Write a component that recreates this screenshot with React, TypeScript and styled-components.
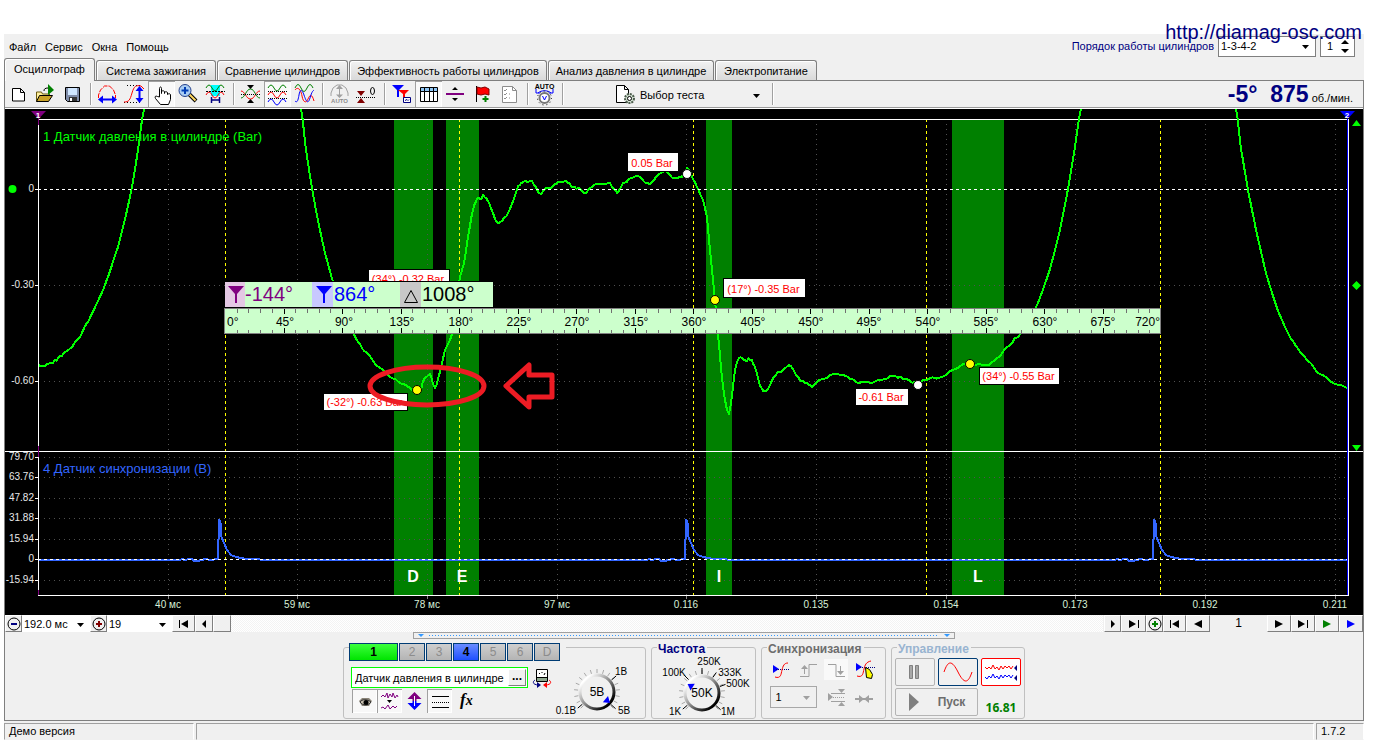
import React from "react";
import styled, { createGlobalStyle, css } from "styled-components";

const UI = `"Liberation Sans", Arial, sans-serif`;
const NUMERIC = `"Noto Sans", Verdana, sans-serif`;

const GlobalStyle = createGlobalStyle`
  *, *::before, *::after { box-sizing: border-box; }
  body { margin: 0; background: #fff; font-family: ${UI}; font-size: 11px; color: #000; }
  button, select, input { font: inherit; color: inherit; margin: 0; border-radius: 0; }
`;

/* ---------- window frame ---------- */

const Page = styled.div`
  position: relative;
  padding: 34px 12px 5px 4px;
`;

const SiteLink = styled.a`
  position: absolute;
  top: 20px;
  right: 14px;
  z-index: 2;
  font-size: 20px;
  line-height: 24px;
  color: #000080;
  text-decoration: none;
`;

const Window = styled.div`
  background: #f0f0f0;
`;

const MenuRow = styled.header`
  display: flex;
  align-items: center;
  justify-content: space-between;
  height: 24px;
  padding: 0 9px 0 1px;
`;

const Menu = styled.nav`
  display: flex;
  gap: 1px;
`;

const MenuItem = styled.button`
  border: 0;
  background: none;
  padding: 2px 4px 0;
  line-height: 16px;
`;

const OrderForm = styled.div`
  display: flex;
  align-items: center;
  gap: 4px;
`;

const OrderLabel = styled.label`
  color: #000080;
  line-height: 20px;
`;

const SelectBox = styled.span<{ $width: number; $height: number; $plain?: boolean; $arrow?: string }>`
  position: relative;
  display: inline-flex;
  flex: none;
  width: ${(p) => p.$width}px;
  height: ${(p) => p.$height}px;
  border: ${(p) => (p.$plain ? 0 : "1px solid #7f7f7f")};
  background: ${(p) => (p.$plain ? "transparent" : "#fff")};
  color: ${(p) => p.$arrow || "#000"};
  svg { position: absolute; right: 6px; top: 50%; margin-top: -1px; pointer-events: none; }
`;

const Select = styled.select`
  appearance: none;
  width: 100%;
  border: 0;
  padding: 0 2px;
  background: none;
  color: #000;
  outline: none;
`;

const NumberBox = styled.span`
  display: flex;
  align-items: center;
  width: 35px;
  height: 21px;
  border: 1px solid #7f7f7f;
  background: #fff;
  padding-right: 5px;
`;

const NumberInput = styled.input`
  appearance: textfield;
  width: 20px;
  flex: 1;
  min-width: 0;
  border: 0;
  background: none;
  padding: 0 0 0 6px;
  outline: none;
  &::-webkit-inner-spin-button { appearance: none; }
`;

const Tabs = styled.div`
  display: flex;
  align-items: flex-end;
  gap: 1px;
  height: 22px;
`;

const Tab = styled.button<{ $active?: boolean; $width: number }>`
  width: ${(p) => p.$width}px;
  height: 20px;
  padding: 0;
  border: 1px solid #7f7f7f;
  border-bottom: 0;
  border-radius: 3px 3px 0 0;
  background: linear-gradient(#f2f2f2, #d9d9d9);
  box-shadow: inset 1px 1px 0 #fff;
  white-space: nowrap;
  line-height: 18px;
  ${(p) =>
    p.$active &&
    css`
      height: 23px;
      margin: 0 0 -1px;
      padding-bottom: 3px;
      background: #f0f0f0;
      position: relative;
    `}
`;

const Body = styled.main`
  border: 1px solid #7f7f7f;
`;

/* ---------- toolbar ---------- */

const Toolbar = styled.div`
  display: flex;
  align-items: stretch;
  height: 28px;
  border-bottom: 1px solid #fff;
  box-shadow: inset 0 -1px 0 #9a9a9a;
`;

const ToolButton = styled.button<{ $pressed?: boolean }>`
  flex: none;
  width: 27px;
  height: 26px;
  padding: 0;
  border: 0;
  background: ${(p) => (p.$pressed ? "#f9f9f9" : "none")};
  box-shadow: ${(p) => (p.$pressed ? "inset 1px 1px 0 #a0a0a0, inset -1px 0 0 #fff" : "none")};
  svg { display: block; }
`;

const Separator = styled.span`
  flex: none;
  width: 8px;
  height: 22px;
  margin-top: 2px;
  border-left: 4px solid transparent;
  background: linear-gradient(90deg, #a0a0a0 1px, #fff 1px, #fff 2px, transparent 2px) no-repeat;
`;

const TestPicker = styled.label`
  display: flex;
  align-items: center;
  width: 202px;
  padding-left: 48px;
  gap: 2px;
  svg { flex: none; }
`;

const Rpm = styled.div`
  display: flex;
  align-items: baseline;
  margin-left: auto;
  padding-right: 10px;
  gap: 3px;
  line-height: 26px;
  color: #000;
`;

const RpmValue = styled.strong`
  font-size: 23px;
  color: #000080;
  white-space: pre;
`;

/* ---------- oscillogram ---------- */

const ScopeSvg = styled.svg`
  display: block;
  width: 100%;
  height: auto;
  background: #000;
`;

const SvgText = styled.text<{ $size: number; $fill: string; $anchor?: string; $bold?: boolean }>`
  font-family: ${UI};
  font-size: ${(p) => p.$size}px;
  font-weight: ${(p) => (p.$bold ? 700 : 400)};
  fill: ${(p) => p.$fill};
  text-anchor: ${(p) => p.$anchor || "start"};
`;

const FormulaText = styled.text`
  font: italic 700 17px "Liberation Serif", "Times New Roman", serif;
  fill: #000;
`;

/* ---------- navigation strip ---------- */

const NavStrip = styled.div`
  display: flex;
  height: 17px;
`;

const NavButton = styled.button<{ $width: number }>`
  display: flex;
  align-items: center;
  justify-content: center;
  flex: none;
  width: ${(p) => p.$width}px;
  height: 17px;
  padding: 0;
  border: 1px solid;
  border-color: #fff #7f7f7f #7f7f7f #fff;
  background: #f0f0f0;
  svg { flex: none; }
`;

const NavSelect = styled(SelectBox)`
  border: 0;
`;

const Track = styled.div`
  flex: 1;
  margin-right: 1px;
  background: repeating-conic-gradient(#fff 0 25%, #f3f3f3 0 50%) 0 0 / 2px 2px;
`;

const PageNumber = styled.output`
  width: 57px;
  text-align: center;
  font-size: 12px;
  line-height: 17px;
`;

const Splitter = styled.div`
  display: flex;
  align-items: center;
  width: 542px;
  max-width: 100%;
  height: 7px;
  margin: 0 auto;
  padding: 0 4px;
  gap: 5px;
  border: 1px solid #a0a0a0;
`;

const Dots = styled.span`
  flex: 1;
  height: 1px;
  background: repeating-linear-gradient(90deg, #3399ff 0 1px, transparent 1px 3px);
`;

/* ---------- control panel ---------- */

const Controls = styled.section`
  display: flex;
  justify-content: center;
  gap: 5px;
  padding: 8px 0 1px;
`;

const Group = styled.section<{ $width: number }>`
  width: ${(p) => p.$width}px;
  height: 72px;
  border: 1px solid #c0c0c0;
  border-radius: 3px;
`;

const GroupTitle = styled.h2<{ $color: string }>`
  width: fit-content;
  margin: -7px 0 0 5px;
  padding: 0 2px 0 1px;
  background: #f0f0f0;
  font-size: 12px;
  line-height: 16px;
  color: ${(p) => p.$color};
`;

const ChannelGroup = styled(Group)`
  display: flex;
  justify-content: space-between;
`;

const ChannelSide = styled.div`
  padding-left: 5px;
`;

const Channels = styled.div`
  display: flex;
  gap: 1px;
  width: fit-content;
  margin-top: -5px;
  background: #f0f0f0;
  box-shadow: 6px 0 0 #f0f0f0;
`;

const Channel = styled.button<{ $tone?: "green" | "blue" }>`
  width: ${(p) => (p.$tone === "green" ? 49 : 26)}px;
  height: 18px;
  padding: 0;
  font-size: 12px;
  line-height: 16px;
  border: 1px solid #003c74;
  ${(p) =>
    p.$tone
      ? css`
          font-weight: 700;
          color: #000;
          background: ${p.$tone === "green" ? "linear-gradient(#3cff3c, #00e400)" : "linear-gradient(#6a8cff, #1f50ff)"};
        `
      : css`
          color: #8c8c8c;
          background: linear-gradient(#cfcfcf, #b4b4b4);
        `}
`;

const SensorRow = styled.div`
  display: flex;
  align-items: center;
  gap: 4px;
  margin: 6px 0 0 2px;
`;

const SensorBox = styled.span`
  display: flex;
  width: 177px;
  height: 21px;
  padding: 1px;
  border: 1px solid #00ff00;
  background: #fff;
`;

const SensorInput = styled.input`
  flex: 1;
  min-width: 0;
  border: 0;
  padding: 0 0 0 2px;
  background: none;
  outline: none;
`;

const MoreButton = styled.button`
  width: 18px;
  padding: 0 0 4px;
  border: 1px solid;
  border-color: #fff #7f7f7f #7f7f7f #fff;
  background: #f0f0f0;
  font-size: 12px;
  font-weight: 700;
  line-height: 10px;
`;

const SmallButton = styled.button<{ $pressed?: boolean }>`
  width: 25px;
  height: 24px;
  padding: 0;
  border: 0;
  background: ${(p) => (p.$pressed ? "#f8f8f8" : "none")};
  box-shadow: ${(p) => (p.$pressed ? "inset 1px 1px 0 #a0a0a0, inset -1px -1px 0 #fff" : "none")};
  svg { display: block; }
`;

const ViewRow = styled.div`
  display: flex;
  margin: 1px 0 0 3px;
`;

const KnobSvg = styled.svg`
  flex: none;
  overflow: visible;
`;

const SyncGrid = styled.div`
  display: grid;
  grid-template-columns: repeat(4, 28px);
  grid-auto-rows: 24px;
  gap: 4px 0;
  justify-content: center;
  align-items: center;
`;

const SyncSelect = styled(SelectBox)`
  grid-column: span 2;
  margin-left: 2px;
  border-color: #a8a8a8;
  background: #f0f0f0;
`;

const RunGrid = styled.div`
  display: grid;
  grid-template-columns: repeat(3, 40px);
  gap: 2px 3px;
  padding: 1px 3px 0;
`;

const RunButton = styled.button<{ $edge: string; $wide?: boolean; $white?: boolean }>`
  display: flex;
  align-items: center;
  justify-content: center;
  height: 28px;
  padding: 0;
  gap: 18px;
  grid-column: span ${(p) => (p.$wide ? 2 : 1)};
  border: 1px solid ${(p) => p.$edge};
  border-radius: 2px;
  background: ${(p) => (p.$white ? "#fff" : "#f0f0f0")};
  color: #6d6d6d;
  font-size: 12px;
  font-weight: 700;
`;

const Reading = styled.output`
  align-self: end;
  text-align: center;
  font-family: ${NUMERIC};
  font-size: 12px;
  font-weight: 700;
  line-height: 16px;
  color: #008000;
`;

/* ---------- status bar ---------- */

const StatusBar = styled.footer`
  display: flex;
  gap: 2px;
  padding-top: 2px;
`;

const StatusCell = styled.div<{ $width?: number }>`
  flex: ${(p) => (p.$width ? "none" : 1)};
  width: ${(p) => (p.$width ? `${p.$width}px` : "auto")};
  height: 17px;
  padding-left: 4px;
  border: 1px solid;
  border-color: #a0a0a0 #fff #f0f0f0 #a0a0a0;
  line-height: 15px;
`;

/* ---------- icons ---------- */

type IconProps = { children: React.ReactNode; w?: number; h?: number };
const Icon = ({ children, w = 27, h = 26 }: IconProps) => (
  <svg width={w} height={h} viewBox={`0 0 ${w} ${h}`} fill="none" aria-hidden="true">
    {children}
  </svg>
);

const Caret = () => (
  <svg width="7" height="4" viewBox="0 0 7 4" aria-hidden="true">
    <path d="M0 0h7L3.5 4z" fill="currentColor" />
  </svg>
);

const wave = (x: number, y: number, step: number, amp: number, n: number) => {
  let d = `M${x} ${y}`;
  for (let i = 0; i < n; i++) d += `q${step / 2} ${i % 2 ? amp : -amp} ${step} 0`;
  return d;
};

const toolIcons: Record<string, React.ReactNode> = {
  new: <path d="M7.5 7.5h8l4 4v8.5h-12z M15.5 7.5v4h4" fill="#fff" stroke="#000" />,
  open: (
    <>
      <path d="M4.5 20.5v-9.5h5l1 2h7v3" fill="#ffef9c" stroke="#6b5a10" />
      <path d="M4.500 20.500l3-6h13l-4 6z" fill="#c9a227" stroke="#000" />
      <path d="M12 10c0-2 1-3 4-3" stroke="#000" />
      <path d="M16 3l6 6-6 5z" fill="#008000" />
    </>
  ),
  save: (
    <>
      <path d="M6.5 6.5h14v14h-12l-2-2z" fill="#7f8ca8" stroke="#000" />
      <path d="M9 7h9v7H9z" fill="#cfe6ff" />
      <path d="M10 16h8v4h-8z" fill="#333" />
      <path d="M11 17h2v3h-2z" fill="#fff" />
    </>
  ),
  cycle: (
    <>
      <path d="M4.500 17v-3l2-5 4-4h5l4 4 2 5v3" stroke="#f00" strokeDasharray="5 1" />
      <path d="M7 18.5h13" stroke="#00f" strokeWidth="2" />
      <path d="M4 18.5l5-4v8zM23 18.5l-5-4v8z" fill="#00f" />
    </>
  ),
  level: (
    <>
      <path d="M6 4.5h14M3 21.5h16" stroke="#000" strokeDasharray="1 2" />
      <path d="M3 21c5 0 6-2 8-9s4-8 9-7l3 3" stroke="#f00" />
      <path d="M18.5 9v9" stroke="#00f" strokeWidth="2" />
      <path d="M18.5 5l4 5h-8zM18.5 22l4-5h-8z" fill="#00f" />
    </>
  ),
  hand: (
    <path
      d="M11.5 16V7.5c0-2 2-2 2 0v5-2c1-1 2-1 3 0v2-1c1-1 2-1 3 0v2c1-1 2.5-1 3 0v5l-2 5h-8l-5-6c-1-2 0-3 2-2z"
      fill="#fff"
      stroke="#000"
    />
  ),
  zoom: (
    <>
      <path d="M14 13l7 7" stroke="#000" strokeWidth="4" />
      <path d="M14.5 13.5l6 6" stroke="#ffd75e" strokeWidth="2" />
      <circle cx="10" cy="9.5" r="6" fill="#a9cdf3" stroke="#24408a" />
      <path d="M6.5 9.5h7M10 6v7" stroke="#003cb4" strokeWidth="2" />
    </>
  ),
  range: (
    <>
      <path d="M9 4h9v11H9z" fill="#00ffff" />
      <path d={wave(4, 7, 6, 6, 3)} stroke="#008000" />
      <path d={wave(4, 14, 6, 6, 3)} stroke="#f00" />
      <path d="M4 10.5h19" stroke="#000" strokeDasharray="2 1" />
      <path d="M9.5 16v6M17.5 16v6M10 19h8" stroke="#000080" strokeWidth="1.5" />
    </>
  ),
  overlay: (
    <>
      <path d="M4 10c4 0 5 8 9.500 8s5-8 9.500-8" stroke="#f00" />
      <path d="M4 17c4 0 5-9 9.500-9s5 9 9.500 9" stroke="#008000" />
      <path d="M4 13.5h19" stroke="#000" strokeDasharray="1 1" />
      <path d="M10 4h7l-3.5 4zM10 22h7l-3.500-4z" fill="#000" />
    </>
  ),
  split: (
    <>
      <path d={wave(4, 7, 6, 6, 3)} stroke="#008000" />
      <path d={wave(4, 14, 6, 6, 3)} stroke="#f00" />
      <path d={wave(4, 21, 6, 6, 3)} stroke="#00f" />
      <path d="M4 10.5h19M4 17.5h19" stroke="#000" strokeDasharray="1 1" />
    </>
  ),
  mix: (
    <>
      <path d={wave(4, 7, 6, 7, 3)} stroke="#008000" />
      <path d="M4 9c3-4 6 0 7 6s4 8 6 3 4-5 6 2" stroke="#f00" />
      <path d="M4 20c2 2 3 0 4-6s3-6 5 0 4 10 6 3 3-7 4-8" stroke="#00f" />
    </>
  ),
  autoLevel: (
    <>
      <path d="M5 15v-3l2-5 4-3h5l4 3 2 5v3M13.5 6v10" stroke="#a0a0a0" />
      <path d="M10 8l3.5-4 3.5 4zM10 13.5h7l-3.5 3.5z" fill="#a0a0a0" />
      <SvgText x="13.5" y="22" $size={6} $fill="#8c8c8c" $anchor="middle" $bold>AUTO</SvgText>
    </>
  ),
  zero: (
    <>
      <path d="M4 10h8l-4 5zM4 22h8l-4-5z" fill="#800000" />
      <path d="M3 16.5h20" stroke="#000" strokeDasharray="1 1" />
      <ellipse cx="19.5" cy="10" rx="2" ry="3.5" stroke="#000" />
    </>
  ),
  filter: (
    <>
      <path d="M4 4h12l-5 5v7h-2V9z" fill="#00f" />
      <path d="M10 9h11l-4 4v7h-2v-7z" fill="#f00" />
      <path d="M15.5 16.5h7v5h-7z" fill="#fff" stroke="#000080" />
      <path d="M17 19.5l2-1 1 1 1-1" stroke="#000080" />
    </>
  ),
  table: (
    <>
      <path d="M5.5 6.5h17v14h-17z" fill="#fff" stroke="#000" />
      <path d="M6 7h16v3H6z" fill="#8fc6f5" />
      <path d="M5 10.5h18M9.5 7v13M14.5 7v13M18.5 7v13" stroke="#000" />
    </>
  ),
  divider: (
    <>
      <path d="M4 13h18" stroke="#800080" strokeWidth="2" />
      <path d="M13 6l3 3h-6zM10 17h6l-3 3z" fill="#000" />
    </>
  ),
  flag: (
    <>
      <path d="M7.5 5v16" stroke="#000" />
      <path d="M8 6l4 1 4-1 4 2v6l-4-1-4 1-4-1z" fill="#f00" stroke="#800000" />
      <path d="M16.5 15v6M13.5 18h6" stroke="#008000" strokeWidth="2" />
    </>
  ),
  list: (
    <>
      <path d="M6.5 5.5h10l4 4v12h-14z" fill="#fff" stroke="#8c8c8c" />
      <path d="M16.5 5.5v4h4" stroke="#8c8c8c" />
      <path d="M8 9l1 1 2-2M8 13l1 1 2-2M8 17l1 1 2-2M13 13h1M13 17h1" stroke="#8c8c8c" />
    </>
  ),
  autoKnob: (
    <>
      <SvgText x="13.5" y="8" $size={7} $fill="#000" $anchor="middle" $bold>AUTO</SvgText>
      <path d="M7 12c3-3 10-3 13 0" stroke="#00f" />
      <path d="M5 8v4h4M22 8v4h-4" stroke="#00f" />
      <circle cx="13.5" cy="17" r="5" fill="#fff" stroke="#777" strokeWidth="2" />
      <circle cx="13.5" cy="17" r="7" stroke="#000" strokeDasharray="1 3" />
      <path d="M11.5 15l2 4 2-4" stroke="#00f" />
    </>
  ),
};

const toolGroups: { id: string; label: string; pressed?: boolean }[][] = [
  [
    { id: "new", label: "Новый" },
    { id: "open", label: "Открыть" },
    { id: "save", label: "Сохранить" },
  ],
  [
    { id: "cycle", label: "Цикл" },
    { id: "level", label: "Уровень" },
    { id: "hand", label: "Перемещение", pressed: true },
    { id: "zoom", label: "Масштаб" },
    { id: "range", label: "Диапазон" },
  ],
  [
    { id: "overlay", label: "Наложение" },
    { id: "split", label: "Раздельно", pressed: true },
    { id: "mix", label: "Совместно" },
  ],
  [
    { id: "autoLevel", label: "Автоуровень" },
    { id: "zero", label: "Ноль" },
  ],
  [
    { id: "filter", label: "Маркеры" },
    { id: "table", label: "Таблица", pressed: true },
    { id: "divider", label: "Разделитель" },
    { id: "flag", label: "Добавить метку" },
    { id: "list", label: "Список" },
  ],
  [{ id: "autoKnob", label: "Автонастройка" }],
];

const tabs = [
  { label: "Осциллограф", width: 91, active: true },
  { label: "Система зажигания", width: 120 },
  { label: "Сравнение цилиндров", width: 131 },
  { label: "Эффективность работы цилиндров", width: 198 },
  { label: "Анализ давления в цилиндре", width: 166 },
  { label: "Электропитание", width: 102 },
];

/* ---------- signal data ---------- */

type Pt = [number, number];

const pressure: Pt[][] = [
  [[39, 365], [47, 365], [53, 362], [60, 357], [67, 350], [75, 343], [88, 322], [97, 303], [106, 282], [118, 247], [125, 219], [132, 187], [138, 150], [144, 109]],
  [
    [301, 109], [306, 150], [312, 188], [318, 221], [325, 253], [333, 282], [344, 312], [357, 340], [368, 355], [383, 371], [395, 379], [410, 388], [417, 390], [421, 389],
    [423, 382], [427, 376], [430, 374], [432, 380], [435, 388], [438, 379], [441, 367], [445, 350], [452, 334], [457, 300], [460, 277], [464, 263], [468, 237], [473, 210],
    [476, 202], [479, 197], [481, 199], [483, 196], [488, 201], [493, 213], [497, 223], [503, 219], [508, 213], [514, 199], [518, 187], [523, 182], [532, 182], [537, 189],
    [541, 194], [545, 189], [553, 186], [558, 182], [566, 181], [573, 187], [580, 189], [585, 193], [590, 188], [598, 184], [610, 184], [617, 192], [623, 184], [632, 178],
    [640, 177], [648, 184], [653, 181], [658, 175], [668, 172], [674, 179], [682, 176], [687, 169], [693, 179], [703, 200], [707, 217], [709, 240], [712, 270], [715, 300],
    [718, 335], [723, 387], [729, 414], [733, 387], [735, 370], [739, 357], [745, 361], [750, 359], [755, 367], [760, 385], [765, 392], [770, 385], [774, 376], [783, 370],
    [789, 365], [795, 373], [800, 380], [807, 383], [812, 386], [820, 380], [830, 376], [840, 374], [850, 379], [863, 383], [880, 380], [890, 377], [898, 377], [907, 380],
    [918, 383], [927, 379], [940, 377], [950, 372], [960, 366], [970, 364], [980, 365], [992, 363], [1000, 355], [1013, 341], [1022, 331], [1038, 303], [1050, 269],
    [1060, 230], [1068, 189], [1075, 147], [1081, 109],
  ],
  [[1236, 109], [1241, 149], [1248, 190], [1256, 230], [1266, 273], [1278, 311], [1293, 342], [1305, 357], [1318, 372], [1333, 382], [1347, 388]],
];

const tracePath = (points: Pt[]) => {
  const out: string[] = [];
  for (let i = 0; i < points.length - 1; i++) {
    const p0 = points[Math.max(i - 1, 0)];
    const p1 = points[i];
    const p2 = points[i + 1];
    const p3 = points[Math.min(i + 2, points.length - 1)];
    const flat = Math.abs(p2[1] - p1[1]) < 2 * Math.abs(p2[0] - p1[0]);
    const steps = Math.max(2, Math.round((p2[0] - p1[0]) / 2));
    for (let s = 0; s < steps; s++) {
      const t = s / steps;
      const x = p1[0] + (p2[0] - p1[0]) * t;
      const y =
        0.5 *
        (2 * p1[1] + (p2[1] - p0[1]) * t + (2 * p0[1] - 5 * p1[1] + 4 * p2[1] - p3[1]) * t * t + (3 * p1[1] - p0[1] - 3 * p2[1] + p3[1]) * t * t * t);
      const noise = flat ? Math.sin(x * 12.9 + i * 7.3) * 0.9 : 0;
      out.push(`${x.toFixed(1)} ${(y + noise).toFixed(1)}`);
    }
  }
  const last = points[points.length - 1];
  out.push(`${last[0]} ${last[1]}`);
  return "M" + out.join("L");
};

const syncPulses = [218, 685, 1153];
const syncPath =
  "M39 560" +
  syncPulses
    .map(
      (x) =>
        `L${x - 38} 560l2 -1l3 1l4 -1l3 0l2 2l4 0l3 -1l5 -1l4 1l8 -1L${x} 560L${x + 1} 519L${x + 3} 525L${x + 3} 536L${x + 6} 543L${x + 9} 550L${x + 13} 555L${x + 18} 557L${x + 28} 559L${x + 40} 559l4 1`,
    )
    .join("") +
  "L1347 560";

const timeMarks: [number, string][] = [
  [168, "40 мс"], [297, "59 мс"], [427, "78 мс"], [557, "97 мс"], [686, "0.116"], [816, "0.135"], [946, "0.154"], [1075, "0.173"], [1205, "0.192"], [1335, "0.211"],
];
const levelMarks: [number, string][] = [
  [189, "0"], [285, "-0.30"], [381, "-0.60"], [457, "79.70"], [477, "63.76"], [498, "47.82"], [518, "31.88"], [539, "15.94"], [559, "0"], [580, "-15.94"],
];
const bands: [number, number, number, string][] = [
  [394, 39, 413, "D"], [446, 33, 462, "E"], [706, 26, 719, "I"], [952, 52, 978, "L"],
];
const tooltips: { x: number; y: number; w: number; h: number; text: string }[] = [
  { x: 369, y: 270, w: 80, h: 17, text: "(34°) -0.32 Bar" },
  { x: 324, y: 394, w: 83, h: 16, text: "(-32°) -0.63 Bar" },
  { x: 628, y: 153, w: 50, h: 18, text: "0.05 Bar" },
  { x: 724, y: 279, w: 81, h: 18, text: "(17°) -0.35 Bar" },
  { x: 856, y: 389, w: 52, h: 16, text: "-0.61 Bar" },
  { x: 980, y: 368, w: 79, h: 16, text: "(34°) -0.55 Bar" },
];
const points: [number, number, string][] = [
  [417, 390, "#ff0"], [687, 174, "#fff"], [715, 300, "#ff0"], [918, 385, "#fff"], [970, 364, "#ff0"],
];

const rulerTicks = Array.from({ length: 81 }, (_, i) => ({ x: Math.round(225 + i * 11.7), major: i % 5 === 0 }));

const Ruler = () => (
  <g>
    <rect x="225" y="281" width="268" height="28" fill="#000" />
    <rect x="225" y="282" width="268" height="25" fill="#ccffcc" />
    <rect x="225" y="282" width="20" height="25" fill="#e4c8e4" />
    <rect x="312" y="282" width="21" height="25" fill="#c8c8ff" />
    <rect x="400" y="282" width="21" height="25" fill="#c8c8c8" />
    <path d="M228 286h16L237 294v9h-2v-9z" fill="#800080" />
    <path d="M316 286h16L325 294v9h-2v-9z" fill="#00f" />
    <path d="M404.5 302.5h13l-6.5-12z" fill="none" stroke="#000" />
    <SvgText x="245" y="301" $size={20} $fill="#800080">-144°</SvgText>
    <SvgText x="334" y="301" $size={20} $fill="#00f">864°</SvgText>
    <SvgText x="422" y="301" $size={20} $fill="#000">1008°</SvgText>
    <rect x="224.5" y="308.5" width="936" height="25" fill="#ccffcc" stroke="#808080" />
    {rulerTicks.map((t, i) =>
      i === 0 || i === 80 ? null : (
        <path
          key={i}
          d={t.major ? `M${t.x}.5 309v5M${t.x}.5 328v5` : `M${t.x}.5 309v4M${t.x}.5 330v3`}
          stroke={t.major ? "#000" : "#707070"}
          shapeRendering="crispEdges"
        />
      ),
    )}
    {Array.from({ length: 17 }, (_, i) => (
      <SvgText
        key={i}
        x={i === 0 ? 227 : i === 16 ? 1160 : 227 + Math.round(i * 58.4)}
        y="326"
        $size={12}
        $fill="#000"
        $anchor={i === 0 ? "start" : i === 16 ? "end" : "middle"}
      >
        {i * 45}°
      </SvgText>
    ))}
  </g>
);

const Scope = () => (
  <ScopeSvg viewBox="5 109 1358 506" role="img" aria-label="Осциллограмма">
    {bands.map(([x, w]) => (
      <rect key={x} x={x} y="120" width={w} height="475" fill="#008000" />
    ))}
    <g stroke="#505050" strokeDasharray="1 4" shapeRendering="crispEdges">
      {timeMarks.map(([x]) => (
        <path key={x} d={`M${x}.5 124V595`} />
      ))}
      {levelMarks.filter(([, t]) => t !== "0").map(([y]) => (
        <path key={y} d={`M44 ${y}.5H1347`} />
      ))}
    </g>
    <g stroke="#ff0" strokeDasharray="3 3" shapeRendering="crispEdges">
      {[225, 459, 693, 926, 1160].map((x) => (
        <path key={x} d={`M${x}.5 119V595`} />
      ))}
    </g>
    <path d="M38.5 595V119.5H1348.5V595.5H38M5 451.5H1363" fill="none" stroke="#fff" shapeRendering="crispEdges" />
    <path d="M1347.5 119V595" stroke="#00f" shapeRendering="crispEdges" />
    <path d="M38.5 118v7M38.5 446v11M38.5 590v5" stroke="#800080" shapeRendering="crispEdges" />
    <g stroke="#fff" shapeRendering="crispEdges">
      {levelMarks.map(([y]) => (
        <path key={y} d={`M35 ${y}.5h3`} />
      ))}
      {timeMarks.map(([x]) => (
        <path key={x} d={`M${x}.5 596v3`} stroke="#888" />
      ))}
    </g>
    <path d={syncPath} fill="none" stroke="#3366ff" strokeWidth="2" shapeRendering="crispEdges" />
    {pressure.map((seg, i) => (
      <path key={i} d={tracePath(seg)} fill="none" stroke="#00ff00" strokeWidth="2" strokeLinejoin="round" shapeRendering="crispEdges" />
    ))}
    <path d="M38 189.5H1347M38 559.5H1347" stroke="#fff" strokeDasharray="3 3" shapeRendering="crispEdges" />

    <SvgText x="43" y="141" $size={13} $fill="#00ff00">1 Датчик давления в цилиндре (Bar)</SvgText>
    <SvgText x="43" y="473" $size={13} $fill="#3366ff">4 Датчик синхронизации (В)</SvgText>
    {levelMarks.map(([y, t]) => (
      <SvgText key={y} x="34" y={y + 3} $size={10} $fill="#e8e8e8" $anchor="end">{t}</SvgText>
    ))}
    {timeMarks.map(([x, t]) => (
      <SvgText key={x} x={x} y="608" $size={10} $fill="#d8f0d8" $anchor="middle">{t}</SvgText>
    ))}
    {bands.map(([x, , cx, t]) => (
      <SvgText key={x} x={cx} y="582" $size={16} $fill="#fff" $anchor="middle" $bold>{t}</SvgText>
    ))}

    {tooltips.map((b) => (
      <g key={b.text}>
        <rect x={b.x - 0.5} y={b.y - 0.5} width={b.w + 1} height={b.h + 1} fill="#fff" stroke="#000" />
        <SvgText x={b.x + b.w / 2 - 1} y={b.y + b.h - 4} $size={11} $fill="#f00" $anchor="middle">{b.text}</SvgText>
      </g>
    ))}
    <Ruler />
    {points.map(([x, y, c]) => (
      <circle key={x} cx={x} cy={y} r="4.5" fill={c} stroke="#000" />
    ))}

    <path d="M31 111h15l-7.500 8z" fill="#800080" />
    <SvgText x="38" y="118" $size={8} $fill="#fff" $anchor="middle" $bold>1</SvgText>
    <path d="M1340 111h15l-7.500 8z" fill="#00f" />
    <SvgText x="1347" y="118" $size={8} $fill="#fff" $anchor="middle" $bold>2</SvgText>
    <circle cx="12.5" cy="189" r="4" fill="#0f0" />
    <path d="M1352 126h9l-4.5-6zM1352 285.5l4.5-4.5 4.5 4.5-4.5 4.5zM1352 445h9l-4.5 6z" fill="#0f0" />

    <g fill="none" stroke="#ed1c24" strokeWidth="5">
      <ellipse cx="427" cy="386" rx="57" ry="19" />
      <path d="M506 386L529 365V375H552V397H529V407Z" strokeLinejoin="round" />
    </g>
  </ScopeSvg>
);

/* ---------- knobs ---------- */

type KnobLabel = { text: string; x: number; y: number; angle: number };

const polar = (angle: number, r: number) => {
  const a = (angle * Math.PI) / 180;
  return `${(Math.cos(a) * r).toFixed(1)} ${(-Math.sin(a) * r).toFixed(1)}`;
};

const Knob = ({ id, value, pointer, labels, box, width, height }: { id: string; value: string; pointer: number; labels: KnobLabel[]; box: string; width: number; height: number }) => (
  <KnobSvg viewBox={box} width={width} height={height} role="img" aria-label={value}>
    <defs>
      <linearGradient id={id} x1="0" y1="0" x2="1" y2="1">
        <stop offset="0.15" stopColor="#fff" />
        <stop offset="0.5" stopColor="#8a8a8a" />
        <stop offset="0.85" stopColor="#000" />
      </linearGradient>
    </defs>
    {Array.from({ length: 17 }, (_, i) => 225 - i * 16.875).map((a) => (
      <path key={a} d={`M${polar(a, 19)}L${polar(a, 23)}`} stroke="#a8a8a8" />
    ))}
    {labels.map((l) => (
      <path key={l.text} d={`M${polar(l.angle, 19)}L${polar(l.angle, 25)}`} stroke="#000" />
    ))}
    <circle r="17" fill="#f0f0f0" stroke={`url(#${id})`} strokeWidth="3" />
    <path d="M17 0l-6-4v8z" fill="#00f" transform={`rotate(${-pointer})`} />
    <SvgText x="0" y="4" $size={12} $fill="#000" $anchor="middle">{value}</SvgText>
    {labels.map((l) => (
      <SvgText key={l.text} x={l.x} y={l.y} $size={10} $fill="#000" $anchor="middle">{l.text}</SvgText>
    ))}
  </KnobSvg>
);

/* ---------- navigation glyphs ---------- */

const navGlyph = (kind: string, color = "#000") => {
  const shapes: Record<string, React.ReactNode> = {
    first: <path d="M3 4h1v8H3zM12 4v8L5 8z" fill={color} />,
    left: <path d="M10 4v8L6 8z" fill={color} />,
    right: <path d="M6 4v8l4-4z" fill={color} />,
    prev: <path d="M12 4v8L4 8z" fill={color} />,
    next: <path d="M4 4v8l8-4z" fill={color} />,
    last: <path d="M3 4v8l7-4zM12 4h1v8h-1z" fill={color} />,
    minus: (
      <>
        <circle cx="8" cy="8" r="6" stroke="#000" />
        <path d="M5 8h6" stroke={color} strokeWidth="2" />
      </>
    ),
    plus: (
      <>
        <circle cx="8" cy="8" r="6" stroke="#000" />
        <path d="M5 8h6M8 5v6" stroke={color} strokeWidth="2" />
      </>
    ),
  };
  return <Icon w={16} h={16}>{shapes[kind]}</Icon>;
};

const SplitArrow = () => (
  <svg width="6" height="3" viewBox="0 0 6 3" aria-hidden="true">
    <path d="M0 0h6L3 3z" fill="#3399ff" />
  </svg>
);

export default function App() {
  return (
    <Page>
      <GlobalStyle />
      <SiteLink href="http://diamag-osc.com">http://diamag-osc.com</SiteLink>
      <Window>
        <MenuRow>
          <Menu>
            {["Файл", "Сервис", "Окна", "Помощь"].map((m) => (
              <MenuItem key={m} type="button">{m}</MenuItem>
            ))}
          </Menu>
          <OrderForm>
            <OrderLabel htmlFor="order">Порядок работы цилиндров</OrderLabel>
            <SelectBox $width={98} $height={21}>
              <Select id="order"><option>1-3-4-2</option></Select>
              <Caret />
            </SelectBox>
            <NumberBox>
              <NumberInput type="number" defaultValue={1} aria-label="Цилиндр" />
              <svg width="8" height="13" viewBox="0 0 8 13" aria-hidden="true">
                <path d="M0 4h8L4 0zM0 9h8l-4 4z" />
              </svg>
            </NumberBox>
          </OrderForm>
        </MenuRow>
        <Tabs role="tablist">
          {tabs.map((t) => (
            <Tab key={t.label} type="button" role="tab" aria-selected={!!t.active} $active={t.active} $width={t.width}>
              {t.label}
            </Tab>
          ))}
        </Tabs>
        <Body>
          <Toolbar>
            {toolGroups.map((group, i) => (
              <React.Fragment key={i}>
                {group.map((tool) => (
                  <ToolButton key={tool.id} type="button" aria-label={tool.label} $pressed={tool.pressed}>
                    <Icon>{toolIcons[tool.id]}</Icon>
                  </ToolButton>
                ))}
                <Separator />
              </React.Fragment>
            ))}
            <TestPicker>
              <Icon w={22} h={22}>
                <path d="M2.5 1.5h8l4 4v13h-12z M10.5 1.5v4h4" fill="#fff" stroke="#000" />
                <circle cx="15.5" cy="14.5" r="4.5" fill="#d4e4d4" stroke="#4c5c4c" strokeWidth="2" strokeDasharray="2 1" />
                <circle cx="15.5" cy="14.5" r="2" fill="#fff" stroke="#000" />
              </Icon>
              <SelectBox $width={128} $height={21} $plain>
                <Select aria-label="Выбор теста"><option>Выбор теста</option></Select>
                <Caret />
              </SelectBox>
            </TestPicker>
            <Separator />
            <Rpm>
              <RpmValue>-5°  875</RpmValue>
              <span>об./мин.</span>
            </Rpm>
          </Toolbar>

          <Scope />

          <NavStrip>
            <NavButton type="button" aria-label="Уменьшить" $width={17}>{navGlyph("minus", "#000080")}</NavButton>
            <NavSelect $width={68} $height={17}>
              <Select aria-label="Длительность"><option>192.0 мс</option></Select>
              <Caret />
            </NavSelect>
            <NavButton type="button" aria-label="Увеличить" $width={17}>{navGlyph("plus", "#800000")}</NavButton>
            <NavSelect $width={65} $height={17}>
              <Select aria-label="Деление"><option>19</option></Select>
              <Caret />
            </NavSelect>
            <NavButton type="button" aria-label="В начало" $width={23}>{navGlyph("first")}</NavButton>
            <NavButton type="button" aria-label="Влево" $width={18}>{navGlyph("left")}</NavButton>
            <NavButton type="button" aria-label="Ползунок" $width={18} />
            <Track />
            <NavButton type="button" aria-label="Вправо" $width={17}>{navGlyph("right")}</NavButton>
            <NavButton type="button" aria-label="В конец" $width={25}>{navGlyph("last")}</NavButton>
            <NavButton type="button" aria-label="Добавить" $width={17}>{navGlyph("plus", "#008000")}</NavButton>
            <NavButton type="button" aria-label="Первая" $width={23}>{navGlyph("first")}</NavButton>
            <NavButton type="button" aria-label="Предыдущая" $width={24}>{navGlyph("prev")}</NavButton>
            <PageNumber>1</PageNumber>
            <NavButton type="button" aria-label="Следующая" $width={24}>{navGlyph("next")}</NavButton>
            <NavButton type="button" aria-label="Последняя" $width={24}>{navGlyph("last")}</NavButton>
            <NavButton type="button" aria-label="Воспроизвести" $width={24}>{navGlyph("next", "#008000")}</NavButton>
            <NavButton type="button" aria-label="Далее" $width={24}>{navGlyph("next", "#00f")}</NavButton>
          </NavStrip>

          <Splitter>
            <SplitArrow />
            <Dots />
            <SplitArrow />
          </Splitter>

          <Controls>
            <ChannelGroup $width={303}>
              <ChannelSide>
                <Channels>
                  <Channel type="button" $tone="green">1</Channel>
                  <Channel type="button">2</Channel>
                  <Channel type="button">3</Channel>
                  <Channel type="button" $tone="blue">4</Channel>
                  <Channel type="button">5</Channel>
                  <Channel type="button">6</Channel>
                  <Channel type="button">D</Channel>
                </Channels>
                <SensorRow>
                  <SensorBox>
                    <SensorInput aria-label="Датчик" defaultValue="Датчик давления в цилиндре" />
                    <MoreButton type="button" aria-label="Выбрать датчик">...</MoreButton>
                  </SensorBox>
                  <Icon w={20} h={20}>
                    <path d="M4.5 1.5h11v12h-11z" fill="#fff" stroke="#000" />
                    <path d="M5 9h10v4H5z" fill="#8fa88f" />
                    <path d="M7 6l1-1M10 5v-1M12 7l1-2M4 9.5h12" stroke="#000" />
                    <path d="M3 12c-3 2-2 5 4 5" stroke="#000080" />
                    <path d="M5 14l4 3-4 3z" fill="#000080" />
                    <path d="M17 12c3 2 2 5-4 5" stroke="#f00" />
                    <path d="M15 14l-4 3 4 3z" fill="#f00" />
                  </Icon>
                </SensorRow>
                <ViewRow>
                  <SmallButton type="button" aria-label="Показать" $pressed>
                    <Icon w={25} h={24}>
                      <path d="M7 12l3-3h7l3 3-3 5h-7z" fill="#8a8478" />
                      <path d="M8 13c2-3 7-3 11 0-3 4-8 4-11 0z" fill="#c8c0b0" stroke="#333" />
                      <circle cx="14" cy="13.5" r="2.5" fill="#000" />
                    </Icon>
                  </SmallButton>
                  <SmallButton type="button" aria-label="Фильтр" $pressed>
                    <Icon w={25} h={24}>
                      <path d="M4 8l2-2 2 2 2-4 1 5 2-4 2 3 1-4 2 5 2-3 1 2M4 19l2-1 2 2 3-4 2 4 3-3 2 2 2-2" stroke="#800080" />
                      <path d="M10 11h5l-2.5 3z" fill="#000" />
                    </Icon>
                  </SmallButton>
                  <SmallButton type="button" aria-label="Инверсия">
                    <Icon w={25} h={24}>
                      <path d="M12.5 3l7 7h-5v2h-4v-2h-5z" fill="#800080" />
                      <path d="M12.5 21l7-7h-5v-2h-4v2h-5z" fill="#00f" />
                      <path d="M12.5 7v10" stroke="#fff" />
                    </Icon>
                  </SmallButton>
                  <SmallButton type="button" aria-label="Уровни" $pressed>
                    <Icon w={25} h={24}>
                      <path d="M5 7.5h17M5 18.5h17" stroke="#000" />
                      <path d="M5 13.5h17" stroke="#000" strokeDasharray="1 1" />
                    </Icon>
                  </SmallButton>
                  <SmallButton type="button" aria-label="Функция">
                    <Icon w={25} h={24}>
                      <FormulaText x="8" y="16">f<tspan fontSize="14">x</tspan></FormulaText>
                    </Icon>
                  </SmallButton>
                </ViewRow>
              </ChannelSide>
              <Knob
                id="volt"
                value="5В"
                pointer={-40}
                box="-36 -44 84 70"
                width={84}
                height={70}
                labels={[
                  { text: "0.1В", x: -31, y: 22, angle: 220 },
                  { text: "1В", x: 24, y: -17, angle: 40 },
                  { text: "5В", x: 27, y: 22, angle: -42 },
                ]}
              />
            </ChannelGroup>

            <Group $width={105}>
              <GroupTitle $color="#000080">Частота</GroupTitle>
              <Knob
                id="freq"
                value="50K"
                pointer={148}
                box="-50 -36 103 62"
                width={103}
                height={62}
                labels={[
                  { text: "1K", x: -27, y: 22, angle: 220 },
                  { text: "100K", x: -28, y: -17, angle: 135 },
                  { text: "250K", x: 7, y: -28, angle: 90 },
                  { text: "333K", x: 28, y: -17, angle: 55 },
                  { text: "500K", x: 36, y: -6, angle: 20 },
                  { text: "1M", x: 26, y: 22, angle: -42 },
                ]}
              />
            </Group>

            <Group $width={125}>
              <GroupTitle $color="#6d6d6d">Синхронизация</GroupTitle>
              <SyncGrid>
                <SmallButton type="button" aria-label="Уровень синхронизации">
                  <Icon w={25} h={24}>
                    <path d="M5 8l6 4-6 4z" fill="#00f" />
                    <path d="M8 12.5h13" stroke="#000080" strokeDasharray="1 1" />
                    <path d="M7 20c6 2 6-3 7-7s2-7 6-7" stroke="#f00" />
                  </Icon>
                </SmallButton>
                <SmallButton type="button" aria-label="По фронту">
                  <Icon w={25} h={24}>
                    <path d="M4 19.5h9v-12h8" stroke="#a0a0a0" />
                    <path d="M8.5 17v-6" stroke="#a0a0a0" />
                    <path d="M5 12h7l-3.5-4z" fill="#a0a0a0" />
                  </Icon>
                </SmallButton>
                <SmallButton type="button" aria-label="По спаду">
                  <Icon w={25} h={24}>
                    <path d="M0 2h24v21H0z" fill="#f9f9f9" />
                    <path d="M4 7.5h8v12h9" stroke="#a0a0a0" />
                    <path d="M16.5 9v6" stroke="#a0a0a0" />
                    <path d="M13 14h7l-3.5 4z" fill="#a0a0a0" />
                  </Icon>
                </SmallButton>
                <SmallButton type="button" aria-label="Установить уровень">
                  <Icon w={25} h={24}>
                    <path d="M4 6l6 4-6 4z" fill="#00f" />
                    <path d="M8 10.5h15" stroke="#000080" strokeDasharray="1 1" />
                    <path d="M5 19c6 2 6-3 7-7s2-7 7-8" stroke="#f00" />
                    <path d="M13.5 10.500l4 2 3 5-1 4-5-1z" fill="#ff0" stroke="#000" />
                  </Icon>
                </SmallButton>
                <SyncSelect $width={47} $height={22} $arrow="#a0a0a0">
                  <Select aria-label="Канал синхронизации"><option>&nbsp;1</option></Select>
                  <Caret />
                </SyncSelect>
                <SmallButton type="button" aria-label="Гистерезис">
                  <Icon w={25} h={24}>
                    <path d="M4 8l5 4-5 4zM14 4h7l-3.5 4zM14 21h7l-3.5-4z" fill="#a0a0a0" />
                    <path d="M7 8.5h14M7 16.5h14" stroke="#a0a0a0" />
                    <path d="M9 12.5h12" stroke="#a0a0a0" strokeDasharray="1 1" />
                  </Icon>
                </SmallButton>
                <SmallButton type="button" aria-label="Сжать">
                  <Icon w={25} h={24}>
                    <path d="M3 14h18" stroke="#a0a0a0" strokeWidth="2" />
                    <path d="M7 10l5 4-5 4zM17 10l-5 4 5 4z" fill="#a0a0a0" />
                  </Icon>
                </SmallButton>
              </SyncGrid>
            </Group>

            <Group $width={134}>
              <GroupTitle $color="#99b4d1">Управление</GroupTitle>
              <RunGrid>
                <RunButton type="button" aria-label="Пауза" $edge="#b4b4b4">
                  <Icon w={14} h={16}>
                    <path d="M1.5 1.5h3v13h-3zM7.5 1.5h3v13h-3z" fill="#a8a8a8" stroke="#808080" />
                  </Icon>
                </RunButton>
                <RunButton type="button" aria-label="Один сигнал" $edge="#003c74">
                  <Icon w={30} h={22}>
                    <path d="M1 11C5-1 9-1 15 11s10 12 14 0" stroke="#f00" />
                  </Icon>
                </RunButton>
                <RunButton type="button" aria-label="Все сигналы" $edge="#f00" $white>
                  <Icon w={34} h={22}>
                    <path d="M1 6l2 2 2-2 2 2 2-4 2 4 2-2 2 3 2-4 2 3 2-3 2 2 2-2 2 3 2-3" stroke="#f00" />
                    <path d="M1 16l2 2 2-3 2 2 2-4 2 4 2-2 2 3 2-4 2 3 2-3 2 2 2-2 2 3 2-3" stroke="#00f" />
                    <path d="M33 4v6l-3-3zM33 14v6l-3-3z" fill="#000080" />
                  </Icon>
                </RunButton>
                <RunButton type="button" $edge="#b4b4b4" $wide>
                  <Icon w={12} h={20}>
                    <path d="M1 1l10 9-10 9z" fill="#808080" />
                  </Icon>
                  Пуск
                </RunButton>
                <Reading>16.81</Reading>
              </RunGrid>
            </Group>
          </Controls>
        </Body>
        <StatusBar>
          <StatusCell $width={190}>Демо версия</StatusCell>
          <StatusCell />
          <StatusCell $width={48}>1.7.2</StatusCell>
        </StatusBar>
      </Window>
    </Page>
  );
}
